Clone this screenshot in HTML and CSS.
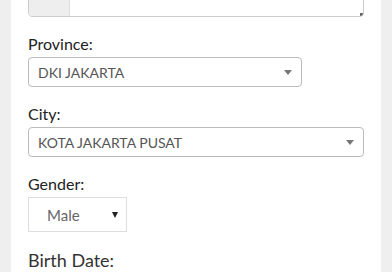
FILE: index.html
```html
<!DOCTYPE html>
<html lang="id">
<head>
  <meta charset="UTF-8" />
  <title>Profile</title>
  <link rel="stylesheet" href="styles.css">
</head>
<body>

<div class="card">
  <div class="address-group">
    <div class="addon"></div>
    <div class="address-box"><span class="grip"></span></div>
  </div>

  <div class="field">
    <label>Province:</label>
    <div class="select">
      <span>DKI JAKARTA</span>
      <svg width="8" height="5" viewBox="0 0 8 5"><path d="M0 0h8L4 5z" fill="#777"/></svg>
    </div>
  </div>

  <div class="field">
    <label>City:</label>
    <div class="select select-wide">
      <span>KOTA JAKARTA PUSAT</span>
      <svg width="8" height="5" viewBox="0 0 8 5"><path d="M0 0h8L4 5z" fill="#777"/></svg>
    </div>
  </div>

  <div class="field">
    <label>Gender:</label>
    <div class="gender">
      <span>Male</span>
      <svg width="6" height="6" viewBox="0 0 6 6"><path d="M0 0h6L3 6z" fill="#222"/></svg>
    </div>
  </div>

  <div class="field">
    <label class="big">Birth Date:</label>
  </div>
</div>

</body>
</html>
```

FILE: styles.css
```css
body {
  font-family: Lato, "Liberation Sans", sans-serif;
  background-color: #efefef;
  color: #222;
  margin: 0;
  padding: 0;
}

.card {
  background: #fff;
  margin: 0 11px;
  padding: 0 17px;
  height: 272px;
  overflow: hidden;
}

.address-group {
  display: flex;
  height: 45px;
  margin-top: -30px;
  border: 1px solid #ccc;
  border-radius: 0 0 4px 4px;
  overflow: hidden;
}

.addon {
  width: 40px;
  background: #eee;
  border-right: 1px solid #ddd;
}

.address-box {
  flex: 1;
  position: relative;
}

.grip {
  position: absolute;
  right: 0;
  bottom: 0;
  width: 3px;
  height: 3px;
  background: #666;
}

.field {
  margin-top: 17px;
}

label {
  display: block;
  font-size: 16px;
  line-height: 20px;
  margin-bottom: 3px;
}

label.big {
  font-size: 18px;
  line-height: 22px;
  color: #333;
}

.select {
  display: flex;
  align-items: center;
  justify-content: space-between;
  width: 274px;
  height: 30px;
  box-sizing: border-box;
  border: 1px solid #bbb;
  border-radius: 4px;
  padding: 0 9px;
  font-size: 14px;
  color: #555;
}

.select-wide {
  width: 336px;
}

.gender {
  display: flex;
  align-items: center;
  justify-content: space-between;
  width: 99px;
  height: 35px;
  box-sizing: border-box;
  border: 1px solid #ddd;
  padding: 0 8px 0 18px;
  font-size: 15px;
  color: #666;
}
```
